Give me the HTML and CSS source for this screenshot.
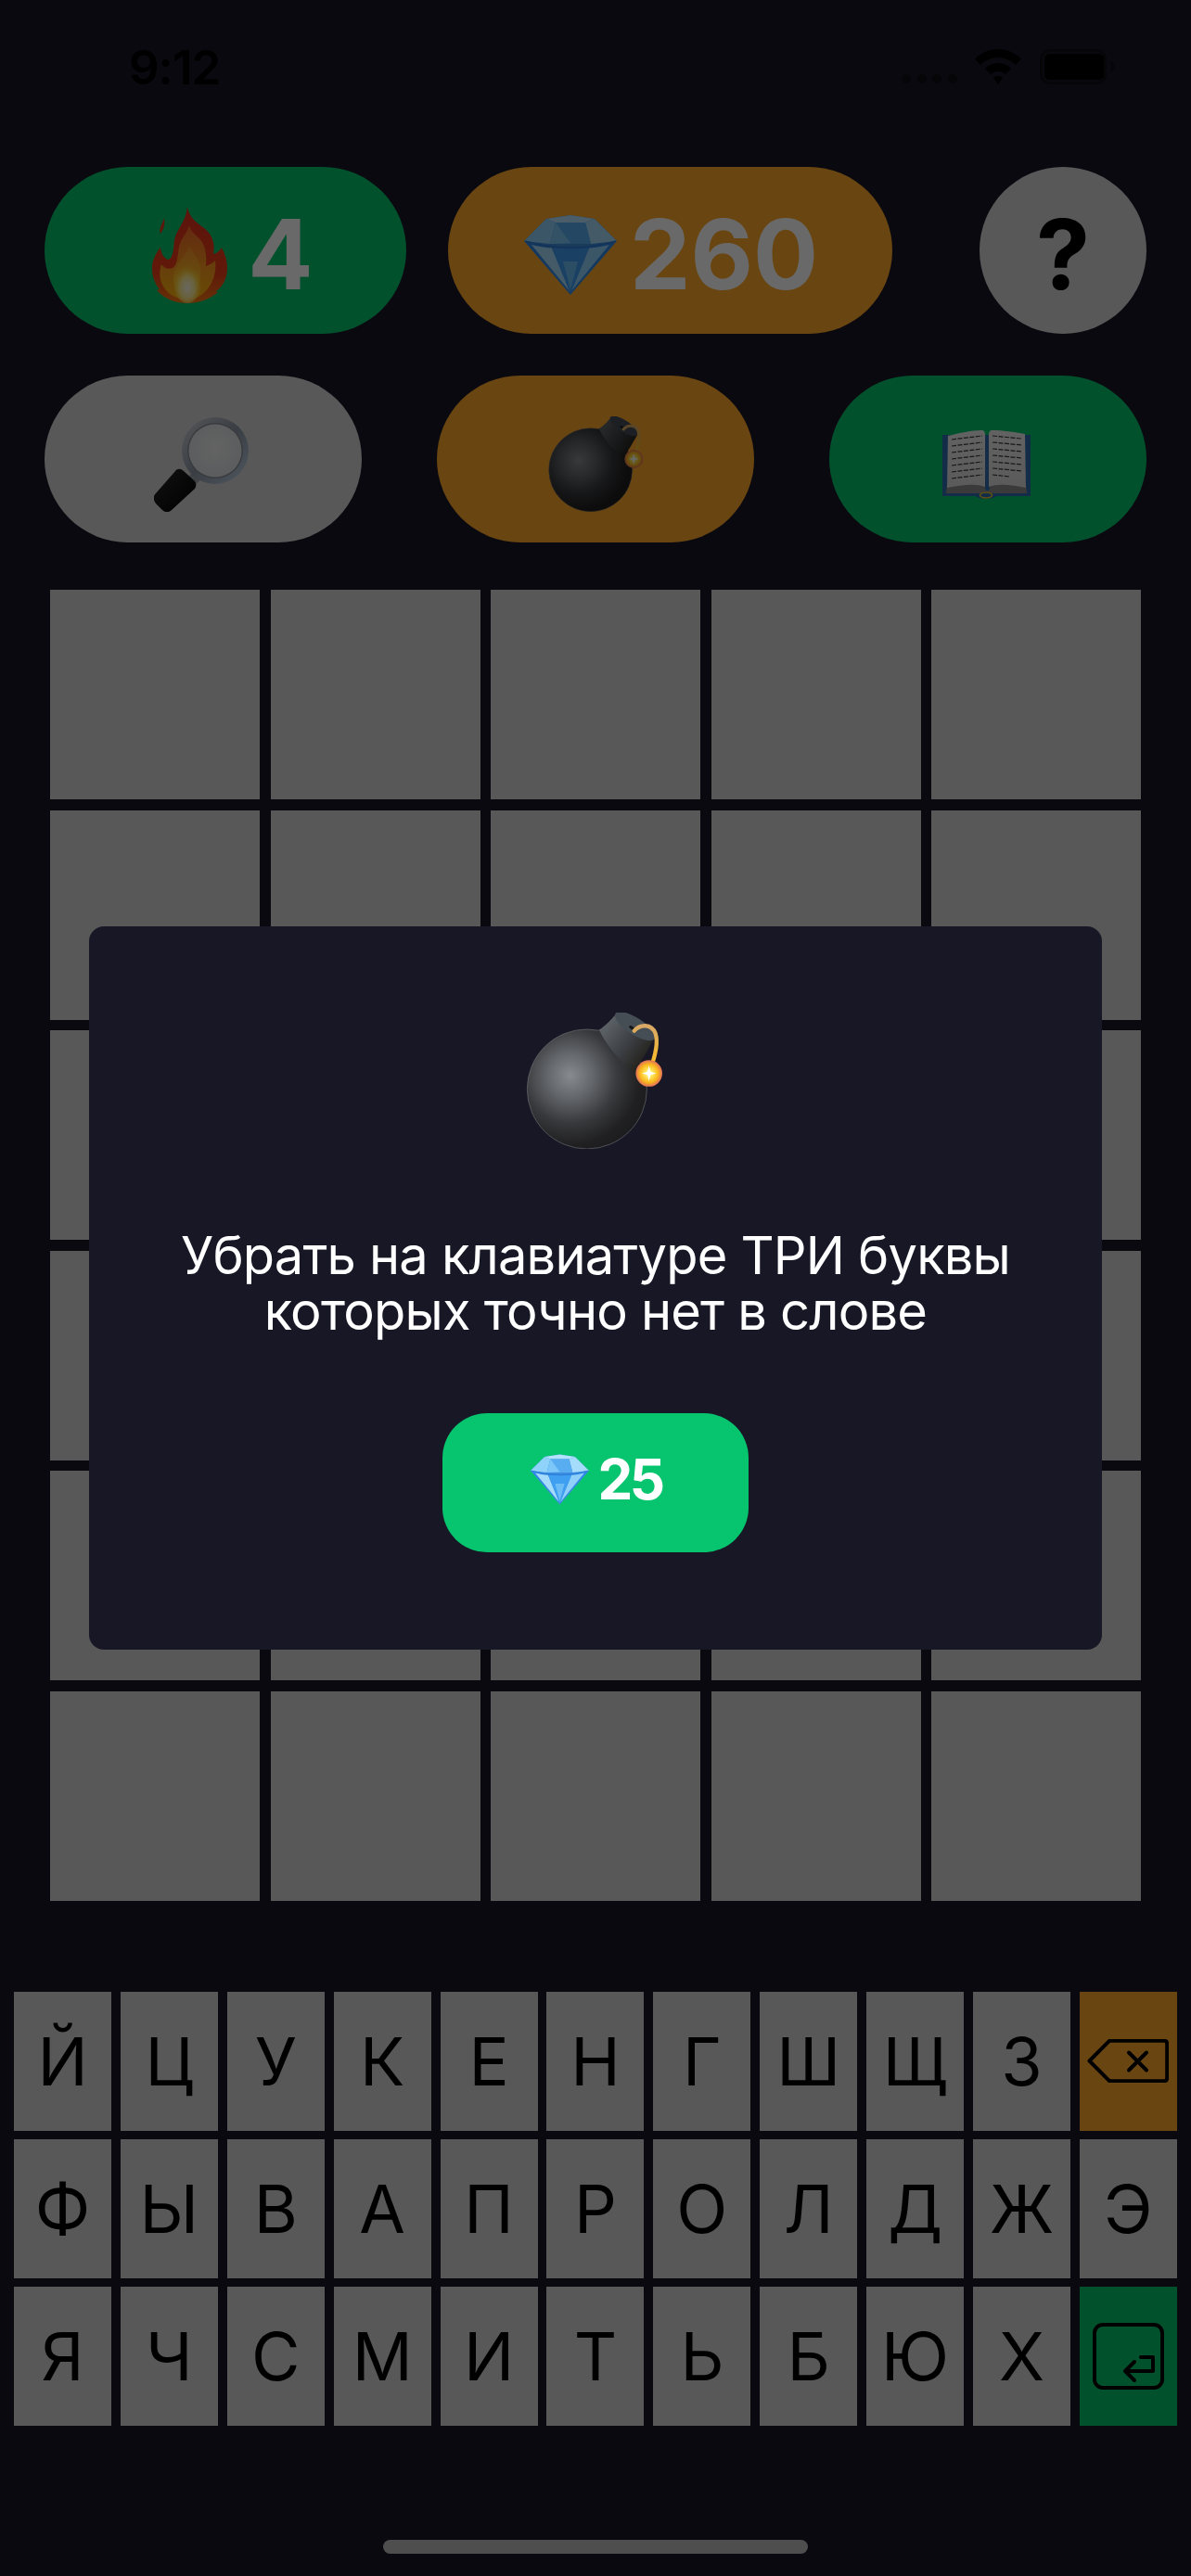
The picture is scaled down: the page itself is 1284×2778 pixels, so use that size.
FILE: index.html
```html
<!DOCTYPE html>
<html lang="ru">
<head>
<meta charset="utf-8">
<title>Слова</title>
<link rel="stylesheet" href="styles.css">
</head>
<body>
<svg class="sprite" xmlns="http://www.w3.org/2000/svg" aria-hidden="true">
  <defs>
    <linearGradient id="fireOuter" x1="0" y1="0" x2="0" y2="1"><stop offset="0" stop-color="#e2311c"/><stop offset=".7" stop-color="#ea3f18"/><stop offset="1" stop-color="#f77a14"/></linearGradient>
    <linearGradient id="fireMid" x1="0" y1="0" x2="0" y2="1"><stop offset="0" stop-color="#f4682a"/><stop offset=".6" stop-color="#f99a1c"/><stop offset="1" stop-color="#ffb60c"/></linearGradient>
    <linearGradient id="fireInner" x1="0" y1="0" x2="0" y2="1"><stop offset="0" stop-color="#f9902a"/><stop offset="1" stop-color="#ffd21c"/></linearGradient>
    <radialGradient id="fireCore" cx=".5" cy=".62" r=".55"><stop offset="0" stop-color="#fffbe8"/><stop offset=".5" stop-color="#ffeb8a"/><stop offset="1" stop-color="#ffd21c" stop-opacity="0"/></radialGradient>
    <radialGradient id="ballShade" gradientUnits="userSpaceOnUse" cx="225" cy="270" r="265"><stop offset="0" stop-color="#878a8e"/><stop offset=".28" stop-color="#63666a"/><stop offset=".58" stop-color="#38393c"/><stop offset=".85" stop-color="#202022"/><stop offset="1" stop-color="#1c1c1e"/></radialGradient>
    <linearGradient id="neckShade" gradientUnits="userSpaceOnUse" x1="340" y1="120" x2="470" y2="215"><stop offset="0" stop-color="#5a5f64"/><stop offset=".55" stop-color="#3a3d41"/><stop offset="1" stop-color="#24221c"/></linearGradient>
    <radialGradient id="sparkGlow" cx=".5" cy=".5" r=".5"><stop offset="0" stop-color="#fffdf0"/><stop offset=".22" stop-color="#fff06a"/><stop offset=".68" stop-color="#fbb81c"/><stop offset="1" stop-color="#e0705a"/></radialGradient>
    <linearGradient id="fuseShade" x1="0" y1="0" x2="0" y2="1"><stop offset="0" stop-color="#d8a866"/><stop offset="1" stop-color="#ffc21e"/></linearGradient>
    <linearGradient id="ringShade" x1="0" y1="0" x2="1" y2="1"><stop offset="0" stop-color="#d0d3d8"/><stop offset=".5" stop-color="#8d97a6"/><stop offset="1" stop-color="#c4d6ea"/></linearGradient>
    <radialGradient id="lensShade" cx=".5" cy=".45" r=".6"><stop offset="0" stop-color="#f0f0f0"/><stop offset="1" stop-color="#dcdfe2"/></radialGradient>
    <linearGradient id="handleShade" x1="0" y1="0" x2="1" y2="1"><stop offset="0" stop-color="#2a2a2c"/><stop offset="1" stop-color="#000"/></linearGradient>
    <linearGradient id="pageShade" x1="0" y1="0" x2="0" y2="1"><stop offset="0" stop-color="#eeeeee"/><stop offset="1" stop-color="#dcdcdc"/></linearGradient>

    <symbol id="fire" viewBox="0 0 81 104">
      <path fill="url(#fireOuter)" d="M38 0C40 12 48 17 56 23C66 31 68 41 66 51C70 50 73 47 75 44C79 52 81 58 81 66C81 78 76 86 69 91L71 92C62 100 50 104 38 104C26 104 14 100 5 90L8 89C3 83 0 75 0 66C0 58 4 50 9 44C10 50 12 55 17 57C23 56 23 44 24 36C26 24 36 18 38 0Z"/>
      <path fill="#dc3a1c" d="M8 26C9 20 12 16 13 12C14 18 13 24 9 29Z"/>
      <path fill="url(#fireMid)" d="M40 20C42 28 50 32 54 38C58 45 59 55 58 64C63 62 66 60 68 58C69 66 68 74 64 82C58 94 48 100 38 100C26 100 16 94 11 84C7 76 8 68 10 62C13 66 17 68 22 66C29 62 27 48 30 40C32 33 38 28 40 20Z"/>
      <path fill="url(#fireInner)" d="M40 42C44 50 50 56 52 66C54 76 50 88 42 96C40 99 36 99 33 96C25 90 20 80 24 70C27 62 36 54 40 42Z"/>
      <ellipse cx="38" cy="82" rx="15" ry="22" fill="url(#fireCore)"/>
    </symbol>

    <symbol id="gem" viewBox="0 0 100 86">
      <path fill="#3f8fe0" d="M0 28 24 4 50 0 76 4 100 28 50 86Z"/>
      <path fill="#b3e2fc" d="M24 4 50 0 76 4 66 8 34 8Z"/>
      <path fill="#8fd2fa" d="M0 28 24 4 34 8 28 31Z"/>
      <path fill="#a5dcfb" d="M100 28 76 4 66 8 72 31Z"/>
      <path fill="#57adf0" d="M34 8 66 8 72 31 28 31Z"/>
      <path fill="#7cc7f8" d="M34 8 50 30 28 31Z"/>
      <path fill="#2f86e4" d="M2 29C16 33 34 35 50 35C66 35 84 33 98 29L50 84Z"/>
      <path fill="#a6dcfb" d="M8 32C16 34 22 35 30 35.5L49 82Z"/>
      <path fill="#8ed0fa" d="M92 32C84 34 78 35 70 35.5L51 82Z"/>
      <path fill="#3f9ff0" d="M30 35.5C44 36.5 56 36.5 70 35.5L50 84Z"/>
      <path fill="#6cbdf6" d="M42 50 58 50 50 80Z"/>
      <path fill="none" stroke="#2f7fd8" stroke-width="1.6" d="M1 28C18 33 34 35 50 35C66 35 82 33 99 28"/>
    </symbol>

    <symbol id="magnifier" viewBox="0 0 102 103">
      <path fill="#9aa0a6" d="M38 64 50 50 58 62 44 74Z"/>
      <path fill="url(#handleShade)" d="M23 59C25 56 29 56 32 59L43 69C46 72 46 75 44 78L19 101C16 104 12 104 9 101L2 94C-1 90 -1 86 2 83Z"/>
      <circle cx="66" cy="37" r="36" fill="url(#ringShade)"/>
      <circle cx="66" cy="37" r="30" fill="#8a9099"/>
      <circle cx="66" cy="37" r="28.5" fill="url(#lensShade)"/>
    </symbol>

    <symbol id="bomb" viewBox="82 66 440 442">
      <circle cx="279" cy="314" r="194" fill="url(#ballShade)" stroke="#6a6d70" stroke-width="2"/>
      <path fill="url(#neckShade)" d="M318 122C338 110 358 88 372 72L497 150C482 178 466 204 452 226C448 244 456 262 468 280C420 262 350 190 318 122Z"/>
      <ellipse cx="434" cy="110" rx="75" ry="27" transform="rotate(33 434 110)" fill="#454d55"/>
      <ellipse cx="424" cy="115" rx="10" ry="5" transform="rotate(33 424 115)" fill="#141618"/>
      <path fill="none" stroke="url(#fuseShade)" stroke-width="13" stroke-linecap="round" d="M432 125C450 104 488 100 501 134C511 165 497 215 484 250"/>
      <circle cx="480" cy="263" r="43" fill="url(#sparkGlow)"/>
      <path fill="#fff" d="M480 238 485 258 503 263 485 268 480 288 475 268 457 263 475 258Z"/>
    </symbol>

    <symbol id="book" viewBox="0 0 95 76">
      <path fill="#2f6fae" d="M0 6H95V72H58C56 76 38 76 36 72H0Z"/>
      <path fill="#8e8e8e" d="M5 60H45L47 66L50 66L52 60H90L91 69H52C49 66 45 66 42 69H4Z"/>
      <path fill="url(#pageShade)" d="M6 7C18 4 32 1 42 1C45 1 46 3 46 6V62C36 58 20 60 5 63Z"/>
      <path fill="url(#pageShade)" d="M50 6C50 3 51 1 54 1C64 1 78 3 89 5L90 63C76 60 60 58 50 62Z"/>
      <path fill="none" stroke="#3a3a3a" stroke-width="1.2" stroke-dasharray="5 1.5" d="M10 11 43 7M10 18 43 14M10 25 43 21M10 32 43 28M10 39 43 35M10 46 43 42M10 53 43 49M54 7 85 10M54 14 86 17M54 21 86 24M54 28 86 31M54 35 86 38M54 42 86 45M54 49 72 51"/>
      <ellipse cx="47" cy="71" rx="6.5" ry="3" fill="none" stroke="#e6c22a" stroke-width="1.6"/>
    </symbol>
  </defs>
</svg>

<main class="screen">
  <header class="status">
    <span class="time">9:12</span>
    <div class="status-icons">
      <svg class="signal" viewBox="0 0 60 10"><circle cx="5" cy="5" r="5"/><circle cx="22" cy="5" r="5"/><circle cx="38" cy="5" r="5"/><circle cx="55" cy="5" r="5"/></svg>
      <svg class="wifi" viewBox="0 0 50 38"><path d="M25 0C34.500 0 43 3.800 50 10.500L44 17C39 12.200 32.300 9 25 9C17.700 9 11 12.200 6 17L0 10.500C7 3.800 15.500 0 25 0Z"/><path d="M25 15C30.500 15 35.300 17.200 39 20.700L33 27C30.800 25 28 24 25 24C22 24 19.200 25 17 27L11 20.700C14.700 17.200 19.500 15 25 15Z"/><path d="M25 29C27 29 28.700 29.700 30 31L25 38L20 31C21.300 29.700 23 29 25 29Z"/></svg>
      <svg class="battery" viewBox="0 0 81 38"><rect class="battery-shell" x="1.500" y="1.500" width="69" height="35" rx="9"/><rect x="5" y="5" width="64" height="28" rx="5.500"/><path class="battery-tip" d="M76 13C79 14.500 81 16.500 81 19C81 21.500 79 23.500 76 25Z"/></svg>
    </div>
  </header>

  <section class="pills">
    <div class="pill-row">
      <div class="pill green streak"><svg class="emoji fire"><use href="#fire"/></svg><span class="pill-value">4</span></div>
      <div class="pill orange gems"><svg class="emoji gem"><use href="#gem"/></svg><span class="pill-value">260</span></div>
      <div class="pill grey help"><span class="pill-value">?</span></div>
    </div>
    <div class="pill-row">
      <div class="pill grey tool"><svg class="emoji tool-magnifier"><use href="#magnifier"/></svg></div>
      <div class="pill orange tool"><svg class="emoji tool-bomb"><use href="#bomb"/></svg></div>
      <div class="pill green tool"><svg class="emoji tool-book"><use href="#book"/></svg></div>
    </div>
  </section>

  <section class="board">
    <div class="cell"></div><div class="cell"></div><div class="cell"></div><div class="cell"></div><div class="cell"></div>
    <div class="cell"></div><div class="cell"></div><div class="cell"></div><div class="cell"></div><div class="cell"></div>
    <div class="cell"></div><div class="cell"></div><div class="cell"></div><div class="cell"></div><div class="cell"></div>
    <div class="cell"></div><div class="cell"></div><div class="cell"></div><div class="cell"></div><div class="cell"></div>
    <div class="cell"></div><div class="cell"></div><div class="cell"></div><div class="cell"></div><div class="cell"></div>
    <div class="cell"></div><div class="cell"></div><div class="cell"></div><div class="cell"></div><div class="cell"></div>
  </section>

  <section class="keyboard">
    <div class="key">Й</div><div class="key">Ц</div><div class="key">У</div><div class="key">К</div><div class="key">Е</div><div class="key">Н</div><div class="key">Г</div><div class="key">Ш</div><div class="key">Щ</div><div class="key">З</div>
    <div class="key orange"><svg class="key-back" viewBox="0 0 88 47"><path d="M24 1.800H83C85 1.800 86.200 3 86.200 5V42C86.200 44 85 45.200 83 45.200H24L2.500 23.500Z"/><path d="M45 14.500 64 33.500M64 14.500 45 33.500"/></svg></div>
    <div class="key">Ф</div><div class="key">Ы</div><div class="key">В</div><div class="key">А</div><div class="key">П</div><div class="key">Р</div><div class="key">О</div><div class="key">Л</div><div class="key">Д</div><div class="key">Ж</div><div class="key">Э</div>
    <div class="key">Я</div><div class="key">Ч</div><div class="key">С</div><div class="key">М</div><div class="key">И</div><div class="key">Т</div><div class="key">Ь</div><div class="key">Б</div><div class="key">Ю</div><div class="key">Х</div>
    <div class="key green"><svg class="key-enter" viewBox="0 0 77 72"><rect x="2" y="2" width="73" height="68" rx="9"/><path d="M52 37H65V52H35M45 42 35 52 45 62"/></svg></div>
  </section>

  <div class="home-bar"></div>
</main>

<div class="overlay">
  <div class="modal">
    <svg class="modal-bomb"><use href="#bomb"/></svg>
    <p class="modal-text">Убрать на клавиатуре ТРИ буквы<br>которых точно нет в слове</p>
    <button class="buy" type="button"><svg class="buy-gem"><use href="#gem"/></svg><span>25</span></button>
  </div>
</div>
</body>
</html>
```

FILE: styles.css
```css
* {
  box-sizing: border-box;
}

html,
body {
  margin: 0;
  padding: 0;
}

body {
  position: relative;
  width: 1284px;
  height: 2778px;
  overflow: hidden;
  background: #181726;
  font-family: Inter, "Noto Sans", sans-serif;
}

.sprite {
  position: absolute;
  width: 0;
  height: 0;
}

.screen {
  display: flex;
  flex-direction: column;
  height: 2778px;
}

/* status bar */
.status {
  display: flex;
  justify-content: space-between;
  height: 180px;
  padding: 53px 82px 0 139px;
  color: #000;
}

.time {
  font-size: 51px;
  font-weight: 600;
  line-height: 40px;
  letter-spacing: -1px;
}

.status-icons {
  display: flex;
  align-items: flex-start;
  height: 38px;
}

.signal {
  width: 60px;
  height: 10px;
  margin-top: 27px;
  fill: #0f0f18;
}

.wifi {
  width: 50px;
  height: 38px;
  margin-left: 19px;
  fill: #000;
}

.battery {
  width: 81px;
  height: 38px;
  margin-left: 20px;
  fill: #000;
}

.battery-shell {
  fill: none;
  stroke: #0f0f18;
  stroke-width: 3px;
}

.battery-tip {
  fill: #0f0f18;
}

/* pills */
.pills {
  display: flex;
  flex-direction: column;
  gap: 45px;
  padding: 0 48px;
}

.pill-row {
  display: flex;
  justify-content: space-between;
}

.pill {
  display: flex;
  align-items: center;
  justify-content: center;
  height: 180px;
  border-radius: 90px;
  font-size: 104px;
  font-weight: 700;
  line-height: 1;
  color: #fff;
}

.pill-value {
  padding-top: 7px;
}

.green {
  background: #07c46e;
}

.orange {
  background: #ffa92a;
}

.grey {
  background: #d6d6d6;
}

.streak {
  width: 390px;
  gap: 22px;
  padding-left: 16px;
}

.gems {
  width: 479px;
  gap: 14px;
  margin-right: 49px;
  padding-left: 2px;
}

.help {
  width: 180px;
  color: #000;
}

.tool {
  width: 342px;
}

.emoji {
  display: block;
  flex: none;
}

.fire {
  width: 81px;
  height: 104px;
  margin-top: 10px;
}

.gem {
  width: 100px;
  height: 86px;
  margin-top: 10px;
}

.tool-magnifier {
  width: 102px;
  height: 103px;
  margin: 11px 4px 0 0;
}

.tool-bomb {
  width: 102px;
  height: 103px;
  margin: 11px 0 0 0;
}

.tool-book {
  width: 95px;
  height: 76px;
  margin: 11px 4px 0 0;
}

/* board */
.board {
  display: grid;
  grid-template-columns: repeat(5, 226px);
  grid-auto-rows: 226px;
  gap: 11.5px;
  margin: 51px 0 0 54px;
}

.cell {
  background: #d6d6d6;
}

/* keyboard */
.keyboard {
  display: grid;
  grid-template-columns: repeat(11, 105px);
  grid-auto-rows: 150px;
  column-gap: 9.9px;
  row-gap: 9px;
  margin: 98px 0 0 15px;
}

.key {
  display: flex;
  align-items: center;
  justify-content: center;
  background: #d6d6d6;
  color: #000;
  font-size: 72px;
  font-weight: 400;
  line-height: 1;
}

.key.orange {
  background: #ffa92a;
}

.key.green {
  background: #07c46e;
}

.key-back,
.key-enter {
  fill: none;
  stroke: #000;
  stroke-width: 4;
  stroke-linecap: round;
  stroke-linejoin: round;
}

.key-back {
  width: 88px;
  height: 47px;
}

.key-enter {
  width: 77px;
  height: 72px;
}

.home-bar {
  align-self: center;
  width: 458px;
  height: 15px;
  margin: 123px 0 0 0;
  border-radius: 8px;
  background: #bdbdbd;
}

/* modal */
.overlay {
  position: absolute;
  inset: 0;
  display: flex;
  align-items: center;
  justify-content: center;
  background: rgba(0, 0, 0, 0.59);
}

.modal {
  display: flex;
  flex-direction: column;
  align-items: center;
  width: 1092px;
  height: 780px;
  padding-top: 93px;
  border-radius: 16px;
  background: #181726;
}

.modal-bomb {
  display: block;
  flex: none;
  width: 147px;
  height: 147px;
  margin-right: 3px;
}

.modal-text {
  margin: 85px 0 0;
  color: #fff;
  font-size: 56px;
  font-weight: 400;
  line-height: 60px;
  letter-spacing: -0.8px;
  text-align: center;
  white-space: nowrap;
}

.buy {
  display: flex;
  align-items: center;
  justify-content: center;
  gap: 9px;
  width: 330px;
  height: 150px;
  margin-top: 80px;
  padding: 0 0 8px 2px;
  border: 0;
  border-radius: 48px;
  background: #07c46e;
  color: #fff;
  font-family: Inter, sans-serif;
  font-size: 60px;
  font-weight: 700;
  line-height: 1;
  letter-spacing: -3.5px;
}

.buy-gem {
  display: block;
  flex: none;
  width: 63px;
  height: 55px;
}
```
